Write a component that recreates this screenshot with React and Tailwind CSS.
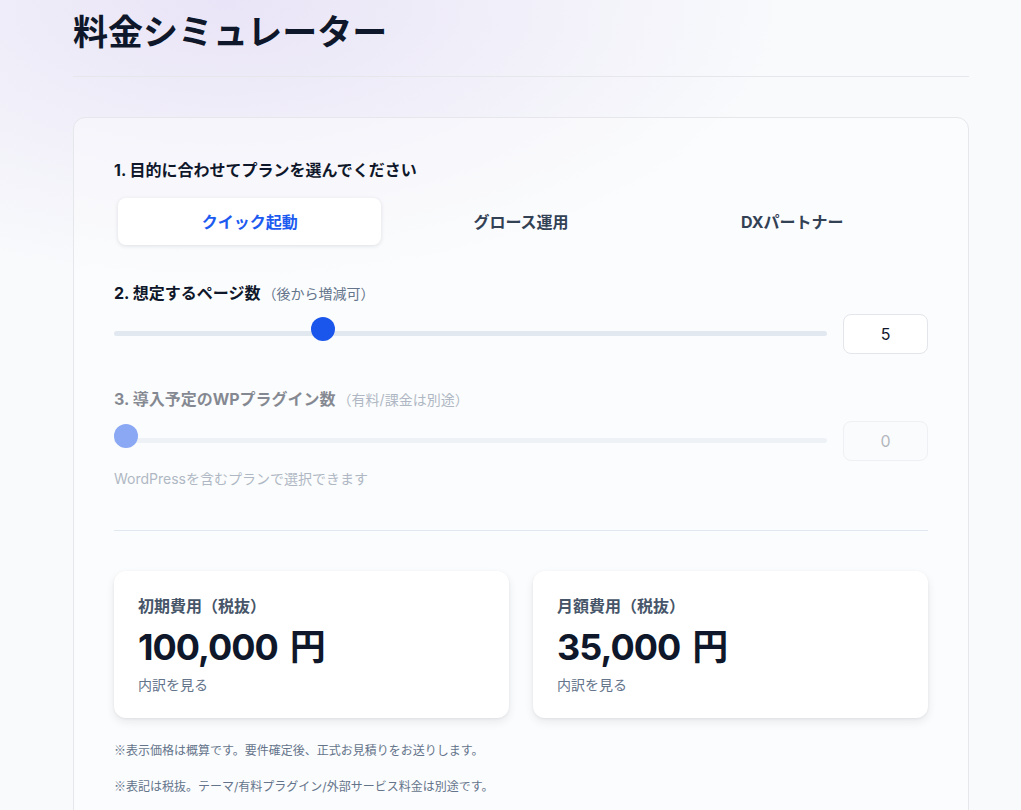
import React from "react";

const FONT = { fontFamily: 'Inter, "Noto Sans CJK JP", "Noto Sans", sans-serif' };
const CJK = { fontFamily: '"Noto Sans CJK JP", sans-serif' };

function Slider({ pct, value, dim }) {
  return (
    <div className="flex items-center gap-4">
      <div className="relative h-10 flex-1">
        <div className="absolute left-0 right-0 top-[17px] h-[5px] rounded-full bg-[#e2e8f0]" />
        <div
          className="absolute top-[3px] h-6 w-6 -translate-x-1/2 rounded-full bg-[#1b56ec]"
          style={{ left: `calc(12px + (100% - 24px) * ${pct})` }}
        />
      </div>
      <div
        className={`flex h-10 w-[85px] items-center justify-center rounded-lg border border-[#e2e5ea] text-base ${
          dim ? "bg-[#fafbfc] text-[#6b7280]" : "bg-white text-[#0f172a]"
        }`}
      >
        {value}
      </div>
    </div>
  );
}

function PriceCard({ label, amount }) {
  return (
    <div className="flex-1 rounded-xl bg-white px-6 pt-6 pb-[23px] shadow-[0_4px_10px_rgba(15,23,42,0.08),0_1px_3px_rgba(15,23,42,0.06)]">
      <div className="text-[16px] font-bold leading-[22px] text-[#475569]">{label}</div>
      <div className="mt-2 flex items-baseline text-[36px] font-bold leading-[44px] tracking-[-1px] text-[#0f172a]">
        <span>{amount}</span>
        <span className="ml-[12px] tracking-normal">円</span>
      </div>
      <div className="mt-[6px] text-[14px] leading-[20px] text-[#64748b]">内訳を見る</div>
    </div>
  );
}

export default function App() {
  return (
    <div
      className="min-h-[810px] w-full bg-[#f8fafc] bg-[radial-gradient(ellipse_560px_280px_at_22%_0%,#e9e4f7_0%,#f0eef9_45%,#f8fafc_100%)] pb-10"
      style={FONT}
    >
      <div className="ml-[73px] w-[896px]">
        <h1 className="pt-[11px] text-[35px] font-bold leading-[42px] text-[#0f172a]">料金シミュレーター</h1>
        <div className="mt-[23px] h-px bg-[#e5e7eb]" />

        <div className="mt-10 rounded-xl border border-[#e5e7eb] bg-white/40 p-10">
          <div className="text-[16px] font-bold leading-[24px] text-[#0f172a]">1. 目的に合わせてプランを選んでください</div>
          <div className="mt-3 grid grid-cols-3 gap-2 p-1">
            <div className="flex h-[47px] items-center justify-center rounded-lg bg-white text-base font-bold text-[#1d5bf0] shadow-[0_1px_4px_rgba(15,23,42,0.12)]">
              クイック起動
            </div>
            <div className="flex h-[47px] items-center justify-center text-base font-bold text-[#334155]">グロース運用</div>
            <div className="flex h-[47px] items-center justify-center text-base font-bold text-[#334155]">DXパートナー</div>
          </div>

          <div className="mt-8 flex items-baseline text-[16px] font-bold leading-[24px] text-[#0f172a]">
            <span>2. 想定するページ数</span>
            <span className="ml-[2px] text-[14px] font-normal text-[#64748b]">（後から増減可）</span>
          </div>
          <div className="mt-2">
            <Slider pct={0.286} value="5" />
          </div>

          <div className="opacity-50">
            <div className="mt-[33px] flex items-baseline text-[16px] font-bold leading-[24px] text-[#0f172a]">
              <span>3. 導入予定のWPプラグイン数</span>
              <span className="ml-[2px] text-[14px] font-normal text-[#64748b]">（有料/課金は別途）</span>
            </div>
            <div className="mt-[9px]">
              <Slider pct={0} value="0" dim />
            </div>
            <div className="mt-2 text-[14px] leading-[20px] text-[#64748b]">WordPressを含むプランで選択できます</div>
          </div>

          <div className="mt-[41px] mb-10 h-px bg-[#e2e8f0]" />

          <div className="flex gap-6">
            <PriceCard label="初期費用（税抜）" amount="100,000" />
            <PriceCard label="月額費用（税抜）" amount="35,000" />
          </div>

          <p className="mt-[24px] text-[12px] leading-[16px] text-[#64748b]">
            <span style={CJK}>※</span>表示価格は概算です。要件確定後、正式お見積りをお送りします。
          </p>
          <p className="mt-[19px] text-[12px] leading-[16px] text-[#64748b]">
            <span style={CJK}>※</span>表記は税抜。テーマ/有料プラグイン/外部サービス料金は別途です。
          </p>
        </div>
      </div>
    </div>
  );
}
